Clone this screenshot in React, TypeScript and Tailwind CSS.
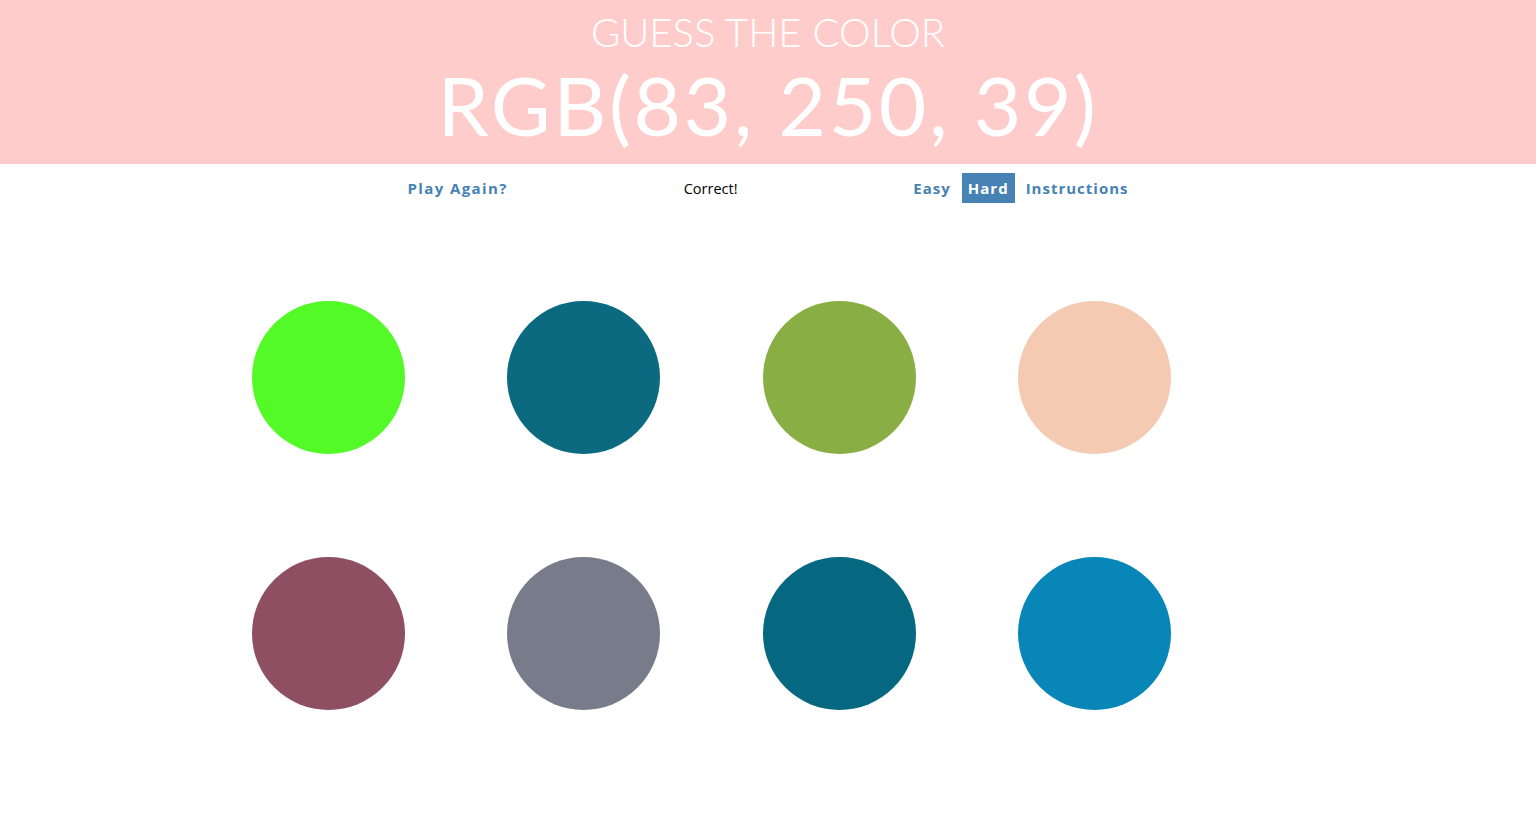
const circles = [
  "#53fa27",
  "#0b6a80",
  "#88ae44",
  "#f5cab3",
  "#8e4f63",
  "#787c8a",
  "#066781",
  "#0986b8",
];

export default function App() {
  return (
    <div className="min-h-screen bg-white">
      {/* header */}
      <header className="h-[164px] bg-[#ffcccc] text-white text-center font-['Lato',sans-serif]">
        <h1 className="pt-[10px] text-[40px] leading-[44px] uppercase font-light">Guess the color</h1>
        <h2 className="text-[82px] leading-[100px] font-normal tracking-[2.6px]">RGB(83, 250, 39)</h2>
      </header>

      {/* controls */}
      <nav className="h-[48px] w-[733px] mx-auto flex items-center justify-between font-['Open_Sans',sans-serif] text-[15px]">
        <button className="h-[30px] px-[6px] pt-[1px] font-bold tracking-[1.4px] text-[#4682b4]">Play Again?</button>
        <span className="pt-[1px] text-black text-[14.5px]">Correct!</span>
        <div className="flex items-center gap-[5px]">
          <button className="h-[30px] px-[6px] pt-[1px] font-bold tracking-[1px] text-[#4682b4]">Easy</button>
          <button className="h-[30px] px-[6px] pt-[1px] font-bold tracking-[1px] bg-[#4682b4] text-white">Hard</button>
          <button className="h-[30px] px-[6px] pt-[1px] font-bold tracking-[1px] text-[#4682b4]">Instructions</button>
        </div>
      </nav>

      {/* swatches */}
      <div className="mt-[89px] ml-[252px] grid grid-cols-[repeat(4,153px)] gap-x-[102.4px] gap-y-[103px]">
        {circles.map((c) => (
          <div key={c} className="w-[153px] h-[153px] rounded-full" style={{ backgroundColor: c }} />
        ))}
      </div>
    </div>
  );
}
